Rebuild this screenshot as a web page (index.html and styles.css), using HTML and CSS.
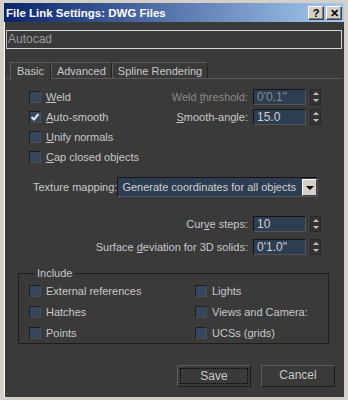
FILE: index.html
```html
<!DOCTYPE html>
<html lang="en">

<head>
    <meta charset="UTF-8">
    <title>File Link Settings: DWG Files</title>
    <link rel="stylesheet" href="styles.css">
</head>

<body>
    <div class="window">
        <div class="titlebar">
            <span class="title">File Link Settings: DWG Files</span>
            <div class="caption-btns">
                <span class="cap-btn">?</span>
                <span class="cap-btn">&#x2715;</span>
            </div>
        </div>

        <div class="content">
            <div class="name-field">Autocad</div>

            <div class="tabs">
                <span class="tab active">Basic</span>
                <span class="tab">Advanced</span>
                <span class="tab">Spline Rendering</span>
            </div>

            <div class="panel">
                <div class="row">
                    <label class="check"><span class="box"></span><span><u>W</u>eld</span></label>
                    <div class="field-group disabled">
                        <span class="lbl">Weld <u>t</u>hreshold:</span>
                        <span class="num">0'0.1"</span>
                        <span class="spin"><i class="up"></i><i class="down"></i></span>
                    </div>
                </div>
                <div class="row">
                    <label class="check"><span class="box"><svg width="10" height="10" viewBox="0 0 10 10"><path d="M1.5 5 L4 7.5 L8.5 2" fill="none" stroke="#e6e6e6" stroke-width="2"/></svg></span><span><u>A</u>uto-smooth</span></label>
                    <div class="field-group">
                        <span class="lbl"><u>S</u>mooth-angle:</span>
                        <span class="num">15.0</span>
                        <span class="spin"><i class="up"></i><i class="down"></i></span>
                    </div>
                </div>
                <div class="row">
                    <label class="check"><span class="box"></span><span><u>U</u>nify normals</span></label>
                </div>
                <div class="row">
                    <label class="check"><span class="box"></span><span><u>C</u>ap closed objects</span></label>
                </div>

                <div class="row mapping">
                    <span class="lbl">Texture mapping:</span>
                    <div class="dropdown">
                        <span>Generate coordinates for all objects</span>
                        <span class="drop-arrow"></span>
                    </div>
                </div>

                <div class="row right first">
                    <div class="field-group">
                        <span class="lbl">Cur<u>v</u>e steps:</span>
                        <span class="num">10</span>
                        <span class="spin"><i class="up"></i><i class="down"></i></span>
                    </div>
                </div>
                <div class="row right">
                    <div class="field-group">
                        <span class="lbl">Surface <u>d</u>eviation for 3D solids:</span>
                        <span class="num">0'1.0"</span>
                        <span class="spin"><i class="up"></i><i class="down"></i></span>
                    </div>
                </div>

                <fieldset class="group">
                    <legend>Include</legend>
                    <div class="group-grid">
                        <label class="check"><span class="box"></span><span>External references</span></label>
                        <label class="check"><span class="box"></span><span>Lights</span></label>
                        <label class="check"><span class="box"></span><span>Hatches</span></label>
                        <label class="check"><span class="box"></span><span>Views and Camera:</span></label>
                        <label class="check"><span class="box"></span><span>Points</span></label>
                        <label class="check"><span class="box"></span><span>UCSs (grids)</span></label>
                    </div>
                </fieldset>
            </div>

            <div class="buttons">
                <button class="btn default"><span>Save</span></button>
                <button class="btn"><span>Cancel</span></button>
            </div>
        </div>
    </div>
</body>

</html>
```

FILE: styles.css
```css
* {
    margin: 0;
    padding: 0;
    box-sizing: border-box;
}

body {
    background: #d4d0c8;
    font-family: "Liberation Sans", Arial, sans-serif;
    font-size: 11px;
    color: #c8c8c8;
}

.window {
    width: 348px;
    height: 400px;
    background: #3a3a3a;
    border: 4px solid #d4d0c8;
    border-top-width: 3px;
    border-bottom-width: 3px;
    box-shadow: inset 1px 1px 0 #fff;
    display: flex;
    flex-direction: column;
}

.titlebar {
    height: 19px;
    background: linear-gradient(90deg, #0a246a, #a6caf0);
    display: flex;
    align-items: center;
    justify-content: space-between;
    padding: 0 2px;
}

.title {
    color: #fff;
    font-weight: bold;
    font-size: 11.5px;
}

.caption-btns {
    display: flex;
    gap: 2px;
}

.cap-btn {
    width: 16px;
    height: 14px;
    background: #d4d0c8;
    border: 1px solid;
    border-color: #fff #404040 #404040 #fff;
    box-shadow: inset -1px -1px 0 #808080;
    color: #000;
    font-weight: bold;
    font-size: 11px;
    line-height: 12px;
    text-align: center;
}

.content {
    flex: 1;
    display: flex;
    flex-direction: column;
    padding: 8px 2px 0;
}

.name-field {
    height: 19px;
    border: 1px solid #d8d8d8;
    border-left-color: #bcbcbc;
    color: #9c9c9c;
    font-size: 12px;
    line-height: 17px;
    padding-left: 1px;
}

.tabs {
    display: flex;
    margin-top: 13px;
    padding-left: 4px;
    border-bottom: 1px solid #5a5a5a;
    height: 17px;
}

.tab {
    border: 1px solid #5a5a5a;
    border-bottom: none;
    border-right-color: #222;
    padding: 1px 5px 0;
    line-height: 14px;
    white-space: nowrap;
}

.tab.active {
    padding: 1px 6px 0;
    height: 18px;
    background: #3a3a3a;
}

.panel {
    padding: 8px 0 0 23px;
    display: flex;
    flex-direction: column;
}

.row {
    height: 20px;
    display: flex;
    align-items: center;
    justify-content: space-between;
    padding-right: 21px;
}

.check {
    display: flex;
    align-items: center;
    gap: 5px;
    white-space: nowrap;
}

.box {
    width: 12px;
    height: 12px;
    background: #34475d;
    border: 1px solid;
    border-color: #1d1d1d #4c4c4c #4c4c4c #1d1d1d;
    display: flex;
    align-items: center;
    justify-content: center;
}

.field-group {
    display: flex;
    align-items: center;
}

.lbl {
    margin-right: 5px;
    white-space: nowrap;
}

.num {
    width: 53px;
    height: 16px;
    background: #2e3e52;
    border: 1px solid;
    border-color: #141414 #555 #555 #141414;
    font-size: 12px;
    line-height: 14px;
    padding-left: 3px;
    color: #d0d0d0;
}

.disabled .lbl,
.disabled .num {
    color: #8a8a8a;
}

.spin {
    width: 11px;
    height: 16px;
    margin-left: 4px;
    display: flex;
    flex-direction: column;
    justify-content: space-around;
    align-items: center;
    background: #333;
    border: 1px solid #2a2a2a;
}

.spin i {
    width: 0;
    height: 0;
    border-left: 3px solid transparent;
    border-right: 3px solid transparent;
}

.spin .up {
    border-bottom: 3px solid #c0c0c0;
}

.spin .down {
    border-top: 3px solid #c0c0c0;
}

.mapping {
    margin-top: 10px;
    justify-content: flex-start;
    padding-left: 4px;
    padding-right: 0;
}

.mapping .lbl {
    margin-right: 0;
}

.dropdown {
    width: 201px;
    height: 20px;
    background: #2e3e52;
    border: 1px solid;
    border-color: #141414 #555 #555 #141414;
    display: flex;
    align-items: center;
    justify-content: space-between;
    padding-left: 4px;
    color: #d0d0d0;
    white-space: nowrap;
}

.drop-arrow {
    width: 15px;
    height: 17px;
    background: #d4d0c8;
    border: 1px solid;
    border-color: #fff #404040 #404040 #fff;
    position: relative;
}

.drop-arrow::after {
    content: '';
    position: absolute;
    left: 3px;
    top: 6px;
    border-left: 4px solid transparent;
    border-right: 4px solid transparent;
    border-top: 4px solid #000;
}

.row.right {
    justify-content: flex-end;
    height: 23px;
}

.row.right.first {
    margin-top: 15px;
}

.group {
    margin: 9px 13px 0 -11px;
    border: 1px solid #1e1e1e;
    padding: 0 0 0 10px;
}

.group legend {
    padding: 0 2px;
    margin-left: 6px;
    line-height: 13px;
}

.group-grid {
    display: grid;
    grid-template-columns: 166px 1fr;
    grid-auto-rows: 21px;
    align-items: center;
}

.buttons {
    display: flex;
    justify-content: flex-end;
    gap: 10px;
    margin-top: 21px;
    padding-right: 7px;
}

.btn {
    width: 74px;
    height: 22px;
    background: #3a3a3a;
    border: 1px solid;
    border-color: #5c5c5c #1c1c1c #1c1c1c #5c5c5c;
    color: #c8c8c8;
    font-family: "Liberation Sans", Arial, sans-serif;
    font-size: 12px;
    padding: 2px;
}

.btn span {
    display: block;
    height: 100%;
    line-height: 15px;
}

.btn.default span {
    border: 1px dotted #000;
}
```
